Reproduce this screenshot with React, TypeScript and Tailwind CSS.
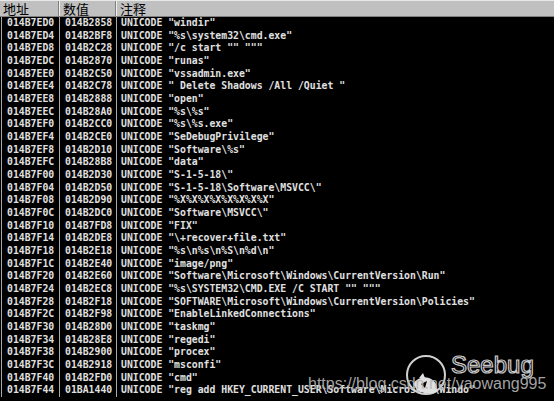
import React from "react";

const rows: [string, string, string][] = [
  ["014B7ED0", "014B2858", '"windir"'],
  ["014B7ED4", "014B2BF8", '"%s\\system32\\cmd.exe"'],
  ["014B7ED8", "014B2C28", '"/c start "" """'],
  ["014B7EDC", "014B2870", '"runas"'],
  ["014B7EE0", "014B2C50", '"vssadmin.exe"'],
  ["014B7EE4", "014B2C78", '" Delete Shadows /All /Quiet "'],
  ["014B7EE8", "014B2888", '"open"'],
  ["014B7EEC", "014B28A0", '"%s\\%s"'],
  ["014B7EF0", "014B2CC0", '"%s\\%s.exe"'],
  ["014B7EF4", "014B2CE0", '"SeDebugPrivilege"'],
  ["014B7EF8", "014B2D10", '"Software\\%s"'],
  ["014B7EFC", "014B28B8", '"data"'],
  ["014B7F00", "014B2D30", '"S-1-5-18\\"'],
  ["014B7F04", "014B2D50", '"S-1-5-18\\Software\\MSVCC\\"'],
  ["014B7F08", "014B2D90", '"%X%X%X%X%X%X%X%X"'],
  ["014B7F0C", "014B2DC0", '"Software\\MSVCC\\"'],
  ["014B7F10", "014B7FD8", '"FIX"'],
  ["014B7F14", "014B2DE8", '"\\+recover+file.txt"'],
  ["014B7F18", "014B2E18", '"%s\\n%s\\n%S\\n%d\\n"'],
  ["014B7F1C", "014B2E40", '"image/png"'],
  ["014B7F20", "014B2E60", '"Software\\Microsoft\\Windows\\CurrentVersion\\Run"'],
  ["014B7F24", "014B2EC8", '"%s\\SYSTEM32\\CMD.EXE /C START "" """'],
  ["014B7F28", "014B2F18", '"SOFTWARE\\Microsoft\\Windows\\CurrentVersion\\Policies"'],
  ["014B7F2C", "014B2F98", '"EnableLinkedConnections"'],
  ["014B7F30", "014B28D0", '"taskmg"'],
  ["014B7F34", "014B28E8", '"regedi"'],
  ["014B7F38", "014B2900", '"procex"'],
  ["014B7F3C", "014B2918", '"msconfi"'],
  ["014B7F40", "014B2FD0", '"cmd"'],
  ["014B7F44", "01BA1440", '"reg add HKEY_CURRENT_USER\\Software\\Microsoft\\Windo"'],
];

export default function App() {
  return (
    <div className="relative w-[554px] h-[401px] bg-black overflow-hidden">
      {/* header */}
      <div className="flex h-[17px] bg-[#c0c0c0] border-t border-t-[#e8e8e8] border-b border-b-[#808080] text-black text-[13px] leading-[15px] [font-family:'Noto_Sans_CJK_SC',sans-serif]">
        <div className="w-[59px] pl-[3px] border-r border-r-[#808080]">地址</div>
        <div className="w-[57px] pl-[3px] border-l border-l-[#f0f0f0] border-r border-r-[#808080]">数值</div>
        <div className="flex-1 pl-[3px] border-l border-l-[#f0f0f0]">注释</div>
      </div>
      {/* rows */}
      <div className="flex flex-col text-[9.8px] font-bold text-[#e0e0e0] [font-family:'DejaVu_Sans_Mono',monospace] whitespace-pre">
        {rows.map((r) => (
          <div key={r[0]} className="flex h-[12.68px] leading-[12.68px]">
            <div className="ml-px w-[58px] pl-[5px] border-l border-l-[#a8a8a8]">
              <span className="inline-block scale-y-[1.15]">{r[0]}</span>
            </div>
            <div className="w-[57px] pl-[5px] border-l border-l-[#a8a8a8]">
              <span className="inline-block scale-y-[1.15]">{r[1]}</span>
            </div>
            <div className="flex-1 pl-[4px] border-l border-l-[#a8a8a8]">
              <span className="inline-block scale-y-[1.15]">UNICODE {r[2]}</span>
            </div>
          </div>
        ))}
      </div>
      {/* watermark */}
      <svg className="absolute left-[405px] top-[353px]" width="46" height="48" viewBox="0 0 46 48">
        <circle cx="21" cy="22" r="19" fill="none" stroke="#d0d0d0" strokeWidth="2" />
        <path d="M8 31 C12 25 18 23 24 25 C30 27 33 33 32 39 C26 41 18 41 12 37 Z" fill="#e0e0e0" />
        <path d="M14 25 L18 20 L20 25 Z" fill="#e0e0e0" />
        <path d="M16 31 L22 28 L20 35 Z" fill="#000" />
      </svg>
      <div className="absolute left-[451px] top-[351px] text-[24px] leading-[28px] text-[rgba(0,0,0,0.3)] [-webkit-text-stroke:1.2px_#c8c8c8] [font-family:'Liberation_Sans',Arial,sans-serif]">
        Seebug
      </div>
      <div className="absolute left-[308px] top-[375px] text-[16px] leading-[18px] text-[#b4b4b4] opacity-90 [font-family:'Liberation_Sans',Arial,sans-serif]">
        https://blog.csdn.net/yaowang995
      </div>
    </div>
  );
}
